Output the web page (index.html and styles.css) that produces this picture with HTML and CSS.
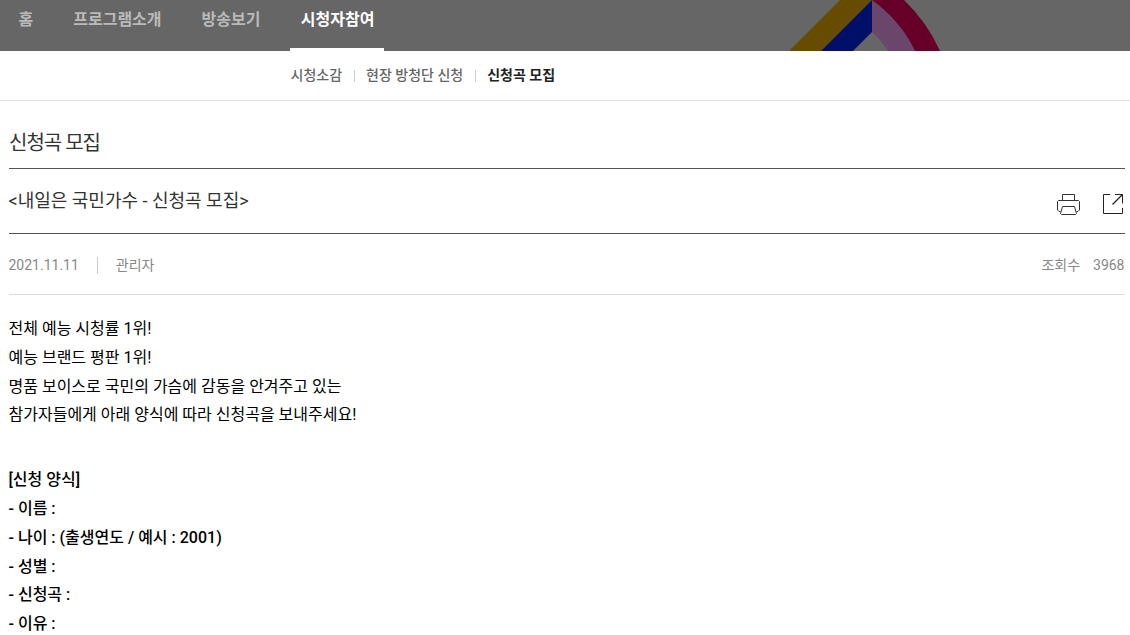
FILE: index.html
```html
<!DOCTYPE html>
<html lang="ko">
<head>
<meta charset="utf-8">
<title>신청곡 모집</title>
<link rel="stylesheet" href="styles.css">
</head>
<body>
<header class="top">
  <svg class="top-art" width="152" height="51" viewBox="0 0 152 51" aria-hidden="true">
    <path fill="#674c00" d="M0 51L51 0H83L32 51z"/>
    <path fill="#001069" d="M32 51L83 0V32L64 51z"/>
    <path fill="#6a476a" d="M83 0C101 13 117 31 126 51H99Q93 41 83 32z"/>
    <path fill="#670028" d="M83 0H115Q138 22 151 51H126C117 31 101 13 83 0z"/>
  </svg>
  <nav class="menu">
    <a class="menu-item">홈</a>
    <a class="menu-item">프로그램소개</a>
    <a class="menu-item">방송보기</a>
    <a class="menu-item menu-on">시청자참여</a>
  </nav>
</header>
<nav class="sub">
  <a class="sub-item">시청소감</a>
  <a class="sub-item">현장 방청단 신청</a>
  <a class="sub-item sub-on">신청곡 모집</a>
</nav>
<main class="board">
  <h1 class="board-title">신청곡 모집</h1>
  <div class="post-head">
    <h2 class="post-title">&lt;내일은 국민가수 - 신청곡 모집&gt;</h2>
    <div class="tools">
      <svg width="24" height="22" viewBox="0 0 24 22" fill="none" stroke="#333" stroke-width="1" aria-label="인쇄">
        <path d="M5.5 6.5V.5H17.5V6.5M3.5 17.5H2L.5 16V7.5L1.5 6.5H21.5L22.5 7.5V16L21 17.5H19.5M5.5 12.5H17.5L19.5 19.5L18.5 20.5H4.5L3.5 19.5z"/>
      </svg>
      <svg width="21" height="21" viewBox="0 0 21 21" fill="none" stroke="#222" stroke-width="1" aria-label="공유">
        <path d="M7 .5H.5V19.5H19.5V14M12 .5H19.5V9.5"/>
        <path stroke-width="1.3" d="M19.5 .5L9.5 10.5"/>
      </svg>
    </div>
  </div>
  <div class="meta">
    <span class="date">2021.11.11</span>
    <span class="writer">관리자</span>
    <span class="views">조회수</span>
    <span class="count">3968</span>
  </div>
  <article class="content">
    <p>전체 예능 시청률 1위!<br>예능 브랜드 평판 1위!<br>명품 보이스로 국민의 가슴에 감동을 안겨주고 있는<br>참가자들에게 아래 양식에 따라 신청곡을 보내주세요!</p>
    <p class="form">[신청 양식]<br>- 이름 :<br>- 나이 : (출생연도 / 예시 : 2001)<br>- 성별 :<br>- 신청곡 :<br>- 이유 :</p>
  </article>
</main>
</body>
</html>
```
FILE: styles.css
```css
* { box-sizing: border-box; margin: 0; padding: 0; }
html { overflow: hidden; }
body {
  height: 635px;
  overflow: hidden;
  background: #fff;
  color: #000;
  font-family: Roboto, "Noto Sans CJK KR", sans-serif;
  font-size: 16px;
}
.top { position: relative; height: 51px; background: #666; overflow: hidden; }
.top-art { position: absolute; left: 789px; top: 0; }
.menu { display: flex; height: 51px; padding-left: 7.5px; gap: 18px; }
.menu-item {
  height: 51px;
  padding: 0 11px;
  line-height: 40px;
  font-weight: 700;
  color: #bababa;
  white-space: nowrap;
}
.menu-on { margin-left: 0.7px; padding: 0 9.5px 0 10.7px; color: #fff; border-bottom: 3px solid #fff; }
.sub {
  display: flex;
  height: 50px;
  padding-left: 290.5px;
  border-bottom: 1px solid #ddd;
  font-size: 14px;
  line-height: 46px;
  font-weight: 500;
  color: #666;
}
.sub-item { display: flex; align-items: center; height: 47px; white-space: nowrap; }
.sub-item + .sub-item::before {
  content: "";
  width: 1px;
  height: 12px;
  margin: 3px 11px 0 12px;
  background: #ccc;
}
.sub-on { font-weight: 700; color: #222; }
.board { padding: 0 5px 0 9px; }
.board-title {
  height: 68px;
  line-height: 85px;
  font-size: 20px;
  font-weight: 400;
  letter-spacing: -1px;
  color: #333;
  border-bottom: 1px solid #555;
}
.post-head {
  display: flex;
  justify-content: space-between;
  height: 65px;
  border-bottom: 1px solid #555;
}
.post-title { font-size: 18px; font-weight: 400; line-height: 63px; text-indent: -0.5px; color: #333; }
.tools { display: flex; gap: 22px; padding: 25px 1px 0 0; }
.meta {
  display: flex;
  align-items: center;
  height: 61px;
  border-bottom: 1px solid #ddd;
  font-size: 14px;
  color: #888;
}
.date, .count { padding-top: 2px; }
.date { text-indent: -0.5px; }
.writer { display: flex; align-items: center; }
.writer::before { content: ""; width: 1px; height: 17px; margin: 2px 18px 0; background: #ccc; }
.views { margin-left: auto; }
.count { margin-left: 13px; margin-right: 0.5px; }
.content { padding-top: 20px; margin-left: -0.5px; line-height: 28.8px; }
.form { margin-top: 36px; font-weight: 500; }
```
